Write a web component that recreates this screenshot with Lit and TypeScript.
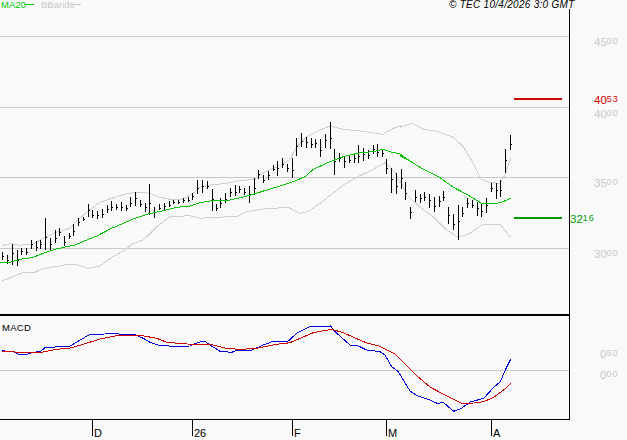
import { LitElement, html, css, svg } from "lit";
import { customElement } from "lit/decorators.js";

type P = number[];
const conv = (pts: P, ox: number, oy: number) => {
  const out: string[] = [];
  for (let i = 0; i < pts.length; i += 2) out.push(`${(ox + pts[i] / 3).toFixed(1)},${(oy + pts[i + 1] / 3).toFixed(1)}`);
  return out;
};
const line = (...segs: [P, number, number][]) => segs.flatMap(([p, x, y]) => conv(p, x, y)).join(" ");

const MA = line(
  [[0,338,30,337,60,328,100,322,130,310,165,298,200,290,225,285,260,270,290,258,335,235,370,220,405,205,445,192,490,182,530,172,570,168,600,158], 0, 150],
  [[0,303,50,302,90,293,130,283,170,270,210,258,250,245,285,230,310,208,360,185,400,170,450,158,490,155,520,148,540,155,570,162,600,183], 210, 100],
  [[0,197,30,213,60,232,120,263,160,292,200,313,245,340,280,342,305,337,332,325], 400, 90]
);
const UP = line(
  [[5,287,30,281,60,286,100,282,130,265,165,248,210,235,240,205,265,182,300,157,340,143,385,130,420,127,450,130,480,142,510,148,550,147,580,130,600,112], 0, 150],
  [[0,255,50,250,90,242,130,238,170,213,210,197,240,178,260,140,290,110,330,90,360,78,400,88,450,93,520,103,545,87,570,78], 210, 100],
  [[0,112,35,100,70,117,110,124,160,142,190,170,220,220,243,268,270,278,300,280,315,255,332,205], 400, 90]
);
const LO = line(
  [[5,392,40,380,70,367,105,367,125,357,165,350,205,343,235,345,265,355,300,348,335,322,375,300,395,283,430,270,470,230,510,200,570,197,600,205], 0, 150],
  [[0,352,80,350,110,335,160,327,235,322,270,341,300,332,350,295,400,255,440,232,490,208,525,188,555,215,570,250], 210, 100],
  [[0,270,20,315,60,352,100,380,140,420,175,442,210,430,245,405,300,402,332,442], 400, 90]
);
const BLUE = line(
  [[5,122,40,125,55,132,85,132,100,127,120,125,135,113,210,108,270,73,315,72,350,70,360,73,385,73,400,72,430,85,450,97,475,105,515,109,570,108,595,97,615,94], 0, 310],
  [[0,105,30,124,65,127,85,120,125,120,160,105,190,94,235,93,260,70,300,50,362,48,375,65,420,105,445,108,470,120,510,125,525,135,545,170,565,185,600,243], 210, 310],
  [[0,257,40,270,60,280,80,278,110,304,130,297,160,276,200,265,230,232,250,215,265,180,281,147], 417, 310]
);
const RED = line(
  [[5,124,60,127,85,129,125,127,170,118,210,114,250,103,300,87,350,77,420,76,470,85,500,97,560,102], 0, 310],
  [[0,103,50,115,85,118,135,116,200,103,240,98,310,68,365,58,400,68,470,99,505,107,555,132], 210, 310],
  [[0,198,40,232,80,253,133,280,170,279,200,275,230,262,260,240,281,220], 417, 310]
);

const B2 = [7,305,330,22,315,342,37,282,345,52,300,348,64,295,315,79,295,315,94,270,298,109,272,302,122,270,298,136,204,300,151,265,302,165,240,278,177,235,258,193,257,288,207,248,268,220,222,258,235,205,228,250,200,212,265,162,200,278,180,205,292,182,207,307,177,203,322,165,190,335,153,183,349,162,180,364,155,183,379,165,182,392,140,170,406,127,168,421,150,172,436,160,185,449,102,195,463,172,203,478,162,180,493,160,180,507,152,170,520,150,162,535,150,162,549,143,160,564,140,155,578,130,150,592,90,133,607,90,128,621,92,118];
const B3 = [6,268,332,18,312,332,32,295,325,46,280,310,61,265,290,75,255,288,89,257,280,103,265,285,118,257,308,133,235,285,146,210,237,160,225,248,175,212,240,190,195,212,203,183,228,218,175,205,232,192,215,247,175,235,260,115,167,273,98,140,289,112,143,303,115,145,317,118,143,331,118,172,346,102,145,361,67,148,373,147,225,388,160,185,403,168,203,418,165,190,432,162,190,446,135,190,461,145,182,475,150,178,489,135,162,503,132,170,518,150,172,530,178,222,545,205,280,560,218,282];
const B4 = [3,238,298,16,275,330,31,350,387,46,300,335,61,312,338,73,305,332,87,312,354,103,322,365,118,318,352,131,303,332,145,350,402,160,372,420,175,345,450,188,352,380,203,323,353,217,330,353,232,335,378,245,340,380,259,323,368,274,278,305,289,280,326,302,270,320,317,177,250,331,135,180];

type Bar = { x: number; t: number; b: number };
const bars: Bar[] = [];
const add = (a: number[], ox: number, oy: number) => {
  for (let i = 0; i < a.length; i += 3)
    bars.push({ x: Math.floor(ox + a[i] / 3), t: Math.round(oy + a[i + 1] / 3), b: Math.round(oy + a[i + 2] / 3) });
};
add(B2, 0, 150);
add(B3, 210, 100);
add(B4, 400, 90);

const barPath = bars
  .map((b, i) => {
    const h = b.b - b.t;
    const open = b.t + Math.round(h * (i % 3 === 0 ? 0.75 : 0.15));
    const close = b.t + Math.round(h * (i % 2 === 0 ? 0.45 : 0.6));
    return `M${b.x + 0.5} ${b.t}V${b.b}M${b.x} ${open + 0.5}H${b.x + 1}M${b.x + 1} ${close + 0.5}H${b.x + 2}`;
  })
  .join("");

const grid = [36, 107, 177, 248];
const ticks = [
  { x: 92, l: "D" },
  { x: 192, l: "26" },
  { x: 292, l: "F" },
  { x: 386, l: "M" },
  { x: 491, l: "A" },
];
const axis = [
  { x: 594, y: 46, a: "45", b: "00", c: "lab" },
  { x: 594, y: 118, a: "40", b: "00", c: "lab" },
  { x: 594, y: 187, a: "35", b: "00", c: "lab" },
  { x: 594, y: 258, a: "30", b: "00", c: "lab" },
  { x: 594, y: 104, a: "40", b: "53", c: "red" },
  { x: 570, y: 223, a: "32", b: "16", c: "grn" },
];

@customElement("app-root")
export class AppRoot extends LitElement {
  static styles = css`
    :host { display: block; width: 627px; height: 440px; background: #f9f9f9; overflow: hidden; }
    svg { display: block; font-family: "Liberation Sans", Arial, sans-serif; }
    .crisp { shape-rendering: crispEdges; }
    .grid { stroke: #c8c8c8; stroke-width: 1; }
    .axis { stroke: #000; stroke-width: 1; }
    .thick { stroke: #000; stroke-width: 2; }
    .bars { stroke: #000; stroke-width: 1; fill: none; }
    .poly { fill: none; stroke-width: 1; shape-rendering: crispEdges; }
    .ma { stroke: #00c000; }
    .bb { stroke: #cfcfcf; }
    .blue { stroke: #0000d8; }
    .redl { stroke: #cc0000; }
    .hred { stroke: #cc0000; stroke-width: 2; }
    .hgrn { stroke: #009900; stroke-width: 2; }
    .lab { fill: #c8c8c8; }
    .red { fill: #cc0000; }
    .grn { fill: #009900; }
    .big { font-size: 11.5px; }
    .sm { font-size: 9px; letter-spacing: 1px; }
    .legend { font-size: 9.5px; }
    .ma-t { fill: #00c800; }
    .bb-t { fill: #c8c8c8; }
    .ma-l { stroke: #00c800; }
    .bb-l { stroke: #c8c8c8; }
    .stamp { font-size: 10px; font-style: italic; fill: #000; letter-spacing: 0.28px; }
    .macd { font-size: 9.5px; fill: #000; letter-spacing: 0.3px; }
    .tick { font-size: 11px; fill: #000; }
    .zero { font-size: 11.5px; }
  `;

  render() {
    return html`<svg width="627" height="440" viewBox="0 0 627 440">
      <g class="crisp">
        ${grid.map((y) => svg`<line class="grid" x1="0" x2="569" y1=${y + 0.5} y2=${y + 0.5}></line>`)}
        <line class="grid" x1="0" x2="569" y1="370.5" y2="370.5"></line>
        <line class="axis" x1="569.5" x2="569.5" y1="9" y2="420"></line>
        <line class="thick" x1="0" x2="570" y1="315" y2="315"></line>
        <line class="axis" x1="0" x2="570" y1="419.5" y2="419.5"></line>
        ${ticks.map((t) => svg`<line class="axis" x1=${t.x + 0.5} x2=${t.x + 0.5} y1="419" y2="436"></line>`)}
        <line class="hred" x1="514" x2="562" y1="99" y2="99"></line>
        <line class="hgrn" x1="514" x2="562" y1="218" y2="218"></line>
        <line class="ma-l" x1="25" x2="34" y1="4.5" y2="4.5"></line>
        <line class="bb-l" x1="73" x2="81" y1="4.5" y2="4.5"></line>
      </g>
      <polyline class="poly bb" points=${UP}></polyline>
      <polyline class="poly bb" points=${LO}></polyline>
      <path class="bars crisp" d=${barPath}></path>
      <polyline class="poly ma" points=${MA}></polyline>
      <polyline class="poly blue" points=${BLUE}></polyline>
      <polyline class="poly redl" points=${RED}></polyline>

      <text class="legend ma-t" x="1" y="8">MA20</text>
      <text class="legend bb-t" x="41" y="8">BBands</text>
      <text class="stamp" x="449" y="8">© TEC 10/4/2026 3:0 GMT</text>
      <text class="macd" x="2" y="331">MACD</text>

      ${axis.map((a) => svg`<text class=${a.c} x=${a.x} y=${a.y}><tspan class="big">${a.a}</tspan><tspan class="sm" dy="-2">${a.b}</tspan></text>`)}
      <text class="lab" x="600" y="358"><tspan class="zero">0</tspan><tspan class="sm" dy="-2">50</tspan></text>
      <text class="lab" x="600" y="379"><tspan class="zero">0</tspan><tspan class="sm" dy="-2">00</tspan></text>
      ${ticks.map((t) => svg`<text class="tick" x=${t.x + 2} y="437">${t.l}</text>`)}
    </svg>`;
  }
}
